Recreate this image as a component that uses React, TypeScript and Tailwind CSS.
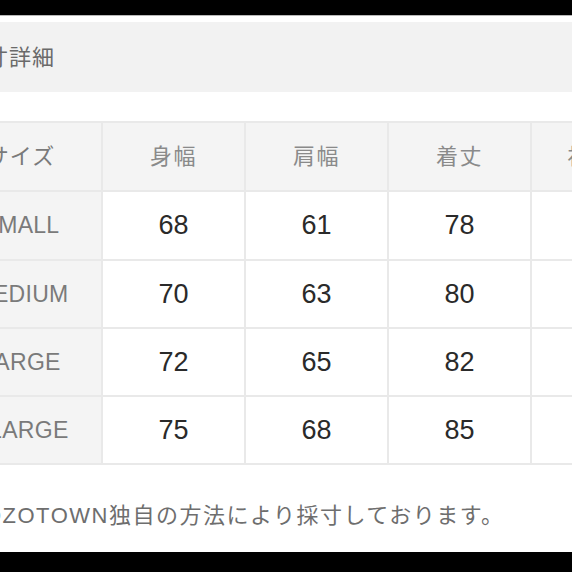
import React from 'react';

const columns = ['身幅', '肩幅', '着丈', '袖丈'];

const rows = [
  { size: 'SMALL', values: ['68', '61', '78', '22'] },
  { size: 'MEDIUM', values: ['70', '63', '80', '23'] },
  { size: 'LARGE', values: ['72', '65', '82', '24'] },
  { size: 'XLARGE', values: ['75', '68', '85', '25'] },
];

const rowHeights = ['h-[67px]', 'h-[66px]', 'h-[66px]', 'h-[66px]'];

export default function App() {
  return (
    <div className="w-[572px] h-[572px] overflow-hidden bg-white flex flex-col font-['Liberation_Sans','Noto_Sans_CJK_JP',sans-serif]">
      <div className="h-[15px] bg-black shrink-0" />
      <div className="h-px bg-[#b8b8b8] shrink-0" />
      <div className="h-[6px] shrink-0" />

      {/* section title */}
      <div className="h-[70px] shrink-0 bg-[#f2f2f2] flex items-center">
        <span className="ml-[-37px] text-[22px] tracking-[1px] text-[#6a6a6a] whitespace-nowrap">採寸詳細</span>
      </div>

      <div className="h-[29px] shrink-0" />

      {/* size table */}
      <div className="ml-[-61px] shrink-0 w-max bg-[#e9e9e9] p-[2px] grid grid-cols-[160px_141px_141px_141px_118px] gap-[2px]">
        <div className="h-[67px] bg-[#f4f4f4] flex items-center justify-center text-[22px] tracking-[1px] text-[#7a7a7a]">
          サイズ
        </div>
        {columns.map((c) => (
          <div key={c} className="h-[67px] bg-[#f4f4f4] flex items-center justify-center text-[22px] tracking-[1.5px] text-[#8a8a8a]">
            {c}
          </div>
        ))}

        {rows.map((row, i) => (
          <React.Fragment key={row.size}>
            <div className={`${rowHeights[i]} bg-[#f4f4f4] flex items-center justify-center text-[23px] text-[#7a7a7a] tracking-[0.3px]`}>
              {row.size}
            </div>
            {row.values.map((v, j) => (
              <div key={j} className={`${rowHeights[i]} bg-white flex items-center justify-center text-[27px] text-[#2a2a2a]`}>
                {v}
              </div>
            ))}
          </React.Fragment>
        ))}
      </div>

      {/* note */}
      <div className="h-[87px] shrink-0 pt-[14px] flex items-center">
        <span className="ml-[-31px] text-[22px] text-[#6e6e6e] whitespace-nowrap tracking-[1.5px]">
          <span className="tracking-[1.5px]">ZOZOTOWN</span>独自の方法により採寸しております。
        </span>
      </div>

      <div className="flex-1 bg-black" />
    </div>
  );
}
